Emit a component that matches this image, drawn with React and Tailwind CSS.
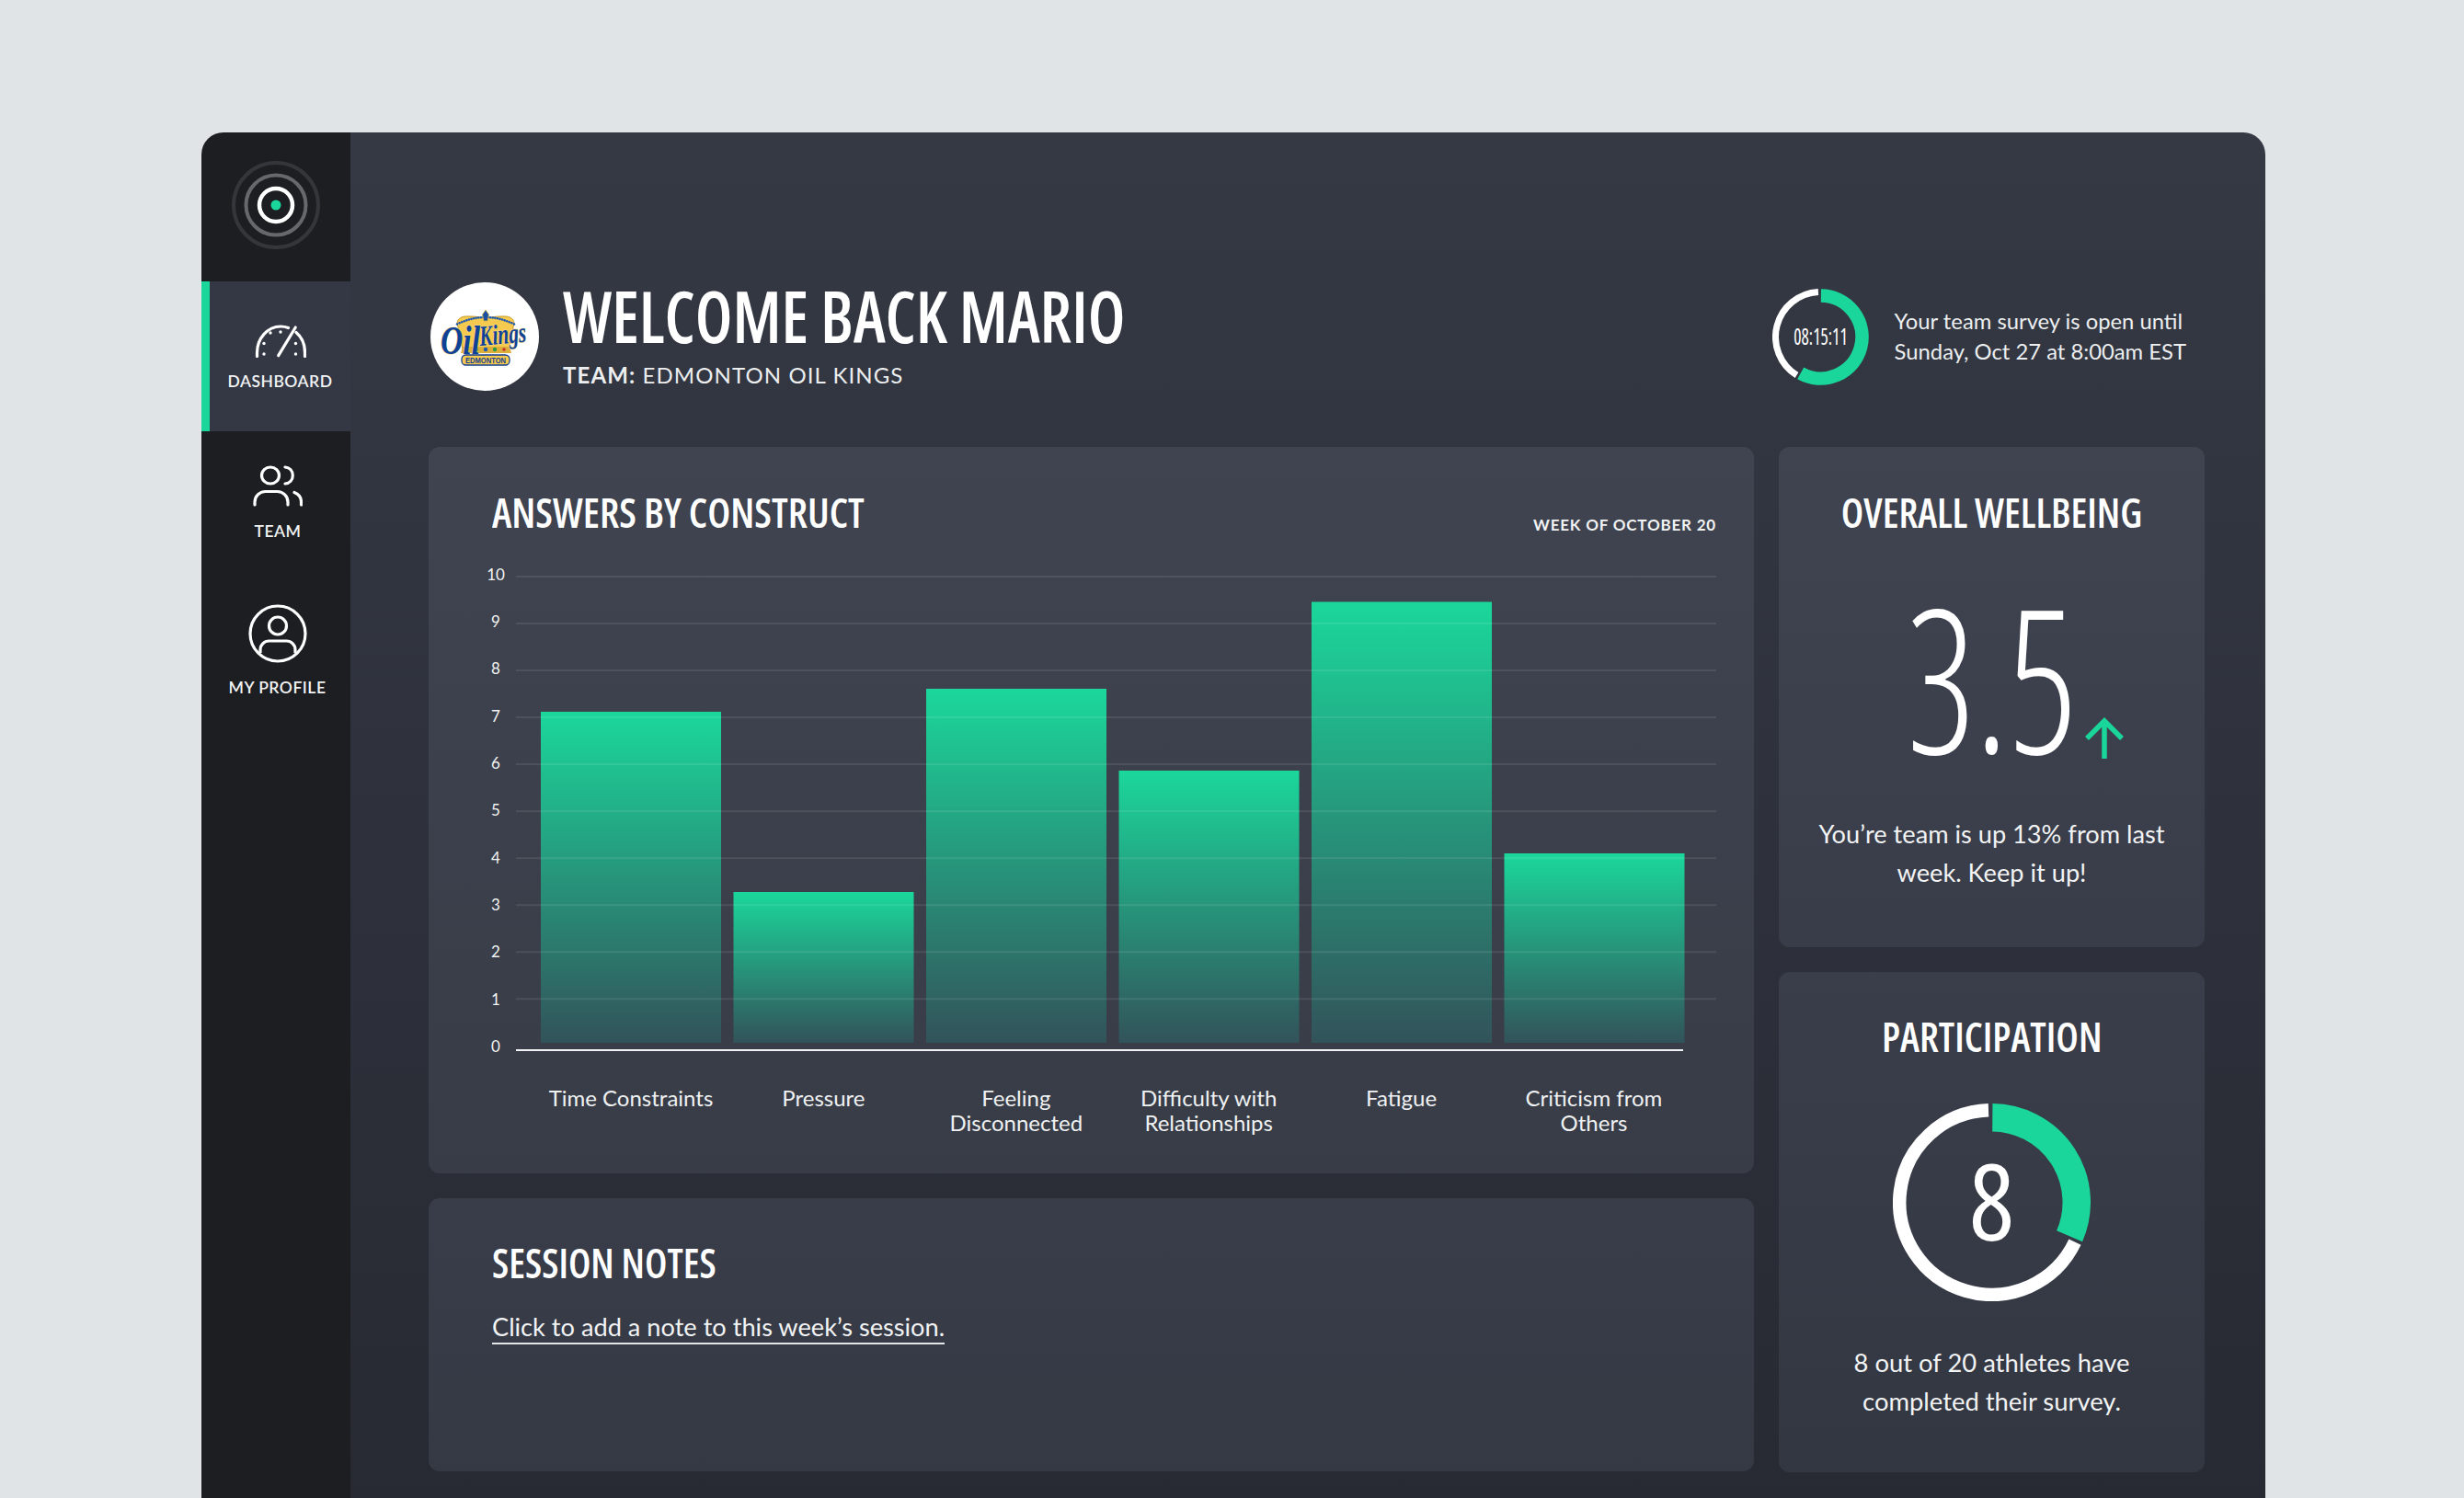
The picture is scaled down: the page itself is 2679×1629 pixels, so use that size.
const GREEN = '#1bd69b';
const cond = "font-['Open_Sans',sans-serif] font-stretch-[75%]";

function polar(cx, cy, r, deg) {
  const a = ((deg - 90) * Math.PI) / 180;
  return [cx + r * Math.cos(a), cy + r * Math.sin(a)];
}
function arc(cx, cy, r, from, to) {
  const [x1, y1] = polar(cx, cy, r, from);
  const [x2, y2] = polar(cx, cy, r, to);
  return `M${x1} ${y1}A${r} ${r} 0 ${to - from > 180 ? 1 : 0} 1 ${x2} ${y2}`;
}

function Ring({ size, gr, gw, gEnd, wr, ww, wStart, wEnd, gStart = 0.5, children }) {
  const c = size / 2;
  return (
    <div className="relative shrink-0" style={{ width: size, height: size }}>
      <svg width={size} height={size} viewBox={`0 0 ${size} ${size}`} fill="none" className="block">
        <path d={arc(c, c, wr, wStart, wEnd)} stroke="#ffffff" strokeWidth={ww} />
        <path d={arc(c, c, gr, gStart, gEnd)} stroke={GREEN} strokeWidth={gw} />
      </svg>
      <div className="absolute inset-0 flex items-center justify-center text-white">{children}</div>
    </div>
  );
}

function AppLogo() {
  return (
    <svg width="100" height="100" viewBox="0 0 100 100" fill="none">
      <circle cx="50" cy="50" r="46" stroke="#34363b" strokeWidth="4" />
      <circle cx="50" cy="50" r="32.5" stroke="#66686c" strokeWidth="4" />
      <circle cx="50" cy="50" r="18" stroke="#ffffff" strokeWidth="4.5" />
      <circle cx="50" cy="50" r="5.5" fill={GREEN} />
    </svg>
  );
}

function GaugeIcon() {
  return (
    <svg width="56" height="36" viewBox="0 0 56 36" fill="none" stroke="#fff" strokeWidth="3.2" strokeLinecap="round">
      <path d="M2.5 34.5v-4C2.5 15 14 2 28 2c3 0 6 .5 8.5 1.500" />
      <path d="M45 8.500c6 5 9.500 13 9.500 22v4" />
      <path d="M25.700 33.700L44.300 3" />
      <g fill="#fff" stroke="none">
        <circle cx="10" cy="32" r="1.700" />
        <circle cx="10" cy="20.500" r="1.700" />
        <circle cx="17" cy="9" r="1.700" />
        <circle cx="28" cy="8" r="1.700" />
        <circle cx="44.500" cy="20.500" r="1.700" />
        <circle cx="44.500" cy="32" r="1.700" />
      </g>
    </svg>
  );
}

function TeamIcon() {
  return (
    <svg width="54" height="45" viewBox="0 0 54 45" fill="none" stroke="#fff" strokeWidth="3.2" strokeLinecap="round">
      <ellipse cx="19" cy="11" rx="9.500" ry="9" />
      <path d="M35 2c5 .5 8.300 4 8.300 9s-3.300 8.500-8.300 9" />
      <path d="M2 43v-3a11.500 11.500 0 0 1 11.500-11.500h13A11.500 11.500 0 0 1 38 40v3" />
      <path d="M45 29.500c4 1.500 7.500 5 7.500 10.500v3" />
    </svg>
  );
}

function ProfileIcon() {
  return (
    <svg width="64" height="64" viewBox="0 0 64 64" fill="none" stroke="#fff" strokeWidth="3.200">
      <circle cx="32" cy="32" r="30" />
      <circle cx="32" cy="23.500" r="9.500" />
      <path d="M13 53v-3.500A9.500 9.500 0 0 1 22.500 40h19a9.500 9.500 0 0 1 9.500 9.500V53" />
    </svg>
  );
}

function TeamLogo() {
  const beads = [];
  for (let i = 0; i <= 24; i++) {
    const t = i / 24;
    const x = 29 + t * 62;
    const y = 38 + 30 * (t - 0.5) * (t - 0.5);
    beads.push(<circle key={i} cx={x} cy={y} r="1.300" fill="#1d5ab0" />);
  }
  return (
    <svg width="118" height="118" viewBox="0 0 118 118" className="ml-[2px] block shrink-0">
      <circle cx="59" cy="59" r="59" fill="#fff" />
      <path d="M29 44c1-5 5-7 10-7 8 0 15 0 21 3 6-3 13-3 21-3 5 0 9 2 10 7l-6 29H35z" fill="#f6c94f" stroke="#c99a2a" strokeWidth="1" />
      {beads}
      <path d="M60 30l3.500 5-1.500 7h-4l-1.500-7z" fill="#1a4fa3" stroke="#d9b23c" strokeWidth=".8" />
      <path d="M35 70h51l2 7H33z" fill="#dcae3a" />
      <circle cx="40" cy="73" r="1.800" fill="#c8332b" />
      <circle cx="50" cy="73" r="2.200" fill="#2a9a4a" />
      <circle cx="60" cy="73" r="2.200" fill="#1d5ab0" />
      <circle cx="70" cy="73" r="2.200" fill="#2a9a4a" />
      <circle cx="80" cy="73" r="1.800" fill="#c8332b" />
      <text x="11" y="78" fontFamily="'Liberation Serif',serif" fontStyle="italic" fontWeight="700" fontSize="44" textLength="43" lengthAdjust="spacingAndGlyphs" fill="#0f4296" stroke="#f6dc8a" strokeWidth="1.200" paintOrder="stroke">Oil</text>
      <text x="54" y="69" transform="rotate(-5 54 69)" fontFamily="'Liberation Serif',serif" fontStyle="italic" fontWeight="700" fontSize="31" textLength="51" lengthAdjust="spacingAndGlyphs" fill="#0f4296" stroke="#f6dc8a" strokeWidth="1.200" paintOrder="stroke">Kings</text>
      <rect x="34" y="79" width="52" height="11" rx="4.500" fill="#f6c94f" stroke="#153f8f" strokeWidth="1.300" />
      <text x="60" y="88" textAnchor="middle" fontFamily="'Liberation Sans',sans-serif" fontWeight="700" fontSize="8.500" textLength="44" lengthAdjust="spacingAndGlyphs" fill="#153f8f">EDMONTON</text>
    </svg>
  );
}

const GRID = [10, 9, 8, 7, 6, 5, 4, 3, 2, 1];
const BARS = [
  ['Time', 60, 163],
  ['Pressure', 269.5, 359],
  ['Feeling', 479, 138],
  ['Difficulty', 688.5, 227],
  ['Fatigue', 898, 43.5],
  ['Criticism', 1107.5, 317],
];

function Plot() {
  return (
    <svg width="1338" height="540" viewBox="0 0 1338 540" className="block">
      <defs>
        <linearGradient id="barFill" x1="0" y1="0" x2="0" y2="1">
          <stop offset="0" stopColor="#1bd79b" />
          <stop offset="1" stopColor="#32535a" />
        </linearGradient>
      </defs>
      {BARS.map((b) => (
        <rect key={b[0]} x={b[1]} y={b[2]} width="196" height={523 - b[2]} fill="url(#barFill)" />
      ))}
      {GRID.map((n, i) => (
        <rect key={n} x="33" y={15 + i * 51.03} width="1305" height="2" fill="#ffffff" fillOpacity="0.09" />
      ))}
      {[10, 9, 8, 7, 6, 5, 4, 3, 2, 1, 0].map((n, i) => (
        <text key={n} x="11" y={19.5 + i * 51.37} textAnchor="middle" fontFamily="Lato,sans-serif" fontSize="17" fill="#f2f3f4">{n}</text>
      ))}
      <rect x="33" y="530" width="1269" height="2" fill="#f1f2f3" />
    </svg>
  );
}

function NavItem({ active, icon, label, className }) {
  return (
    <div className={`flex flex-col items-center ${active ? 'h-[163px] pt-[47px] border-l-[9px] border-[#1bd69b] bg-[#343844]' : ''} ${className || ''}`}>
      {icon}
      <div className={`text-[17.500px] leading-[20px] font-semibold tracking-[0.5px] text-[#f2f3f4] ${active ? 'mt-[16px]' : 'mt-[17px]'}`}>{label}</div>
    </div>
  );
}

export default function App() {
  return (
    <div className="h-[1629px] overflow-hidden bg-[#e0e4e7] pt-[144px] pl-[219px] font-['Lato',sans-serif]">
      <div className="flex h-[1485px] w-[2244px] overflow-hidden rounded-t-[24px]">
        <aside className="w-[162px] shrink-0 bg-[#1c1e22]">
          <div className="flex h-[162px] items-center justify-center pb-[4px]"><AppLogo /></div>
          <NavItem active icon={<GaugeIcon />} label="DASHBOARD" />
          <NavItem icon={<TeamIcon />} label="TEAM" className="pt-[37px] pl-[4px]" />
          <NavItem icon={<ProfileIcon />} label="MY PROFILE" className="pt-[69px] pl-[3px]" />
        </aside>

        <main className="flex-1 bg-gradient-to-b from-[#353944] to-[#272a33] pl-[85px] pr-[66px]">
          <header className="flex h-[342px] items-center pt-[102px]">
            <TeamLogo />
            <div className="mb-[8px] ml-[26px]">
              <h1 className={`${cond} origin-left scale-x-[.918] whitespace-nowrap text-[78px] font-semibold leading-[84px] text-white`}>WELCOME BACK MARIO</h1>
              <div className="mt-[8px] text-[24px] leading-[30px] tracking-[1.1px] text-[#eceef0]"><span className="font-bold">TEAM:</span> EDMONTON OIL KINGS</div>
            </div>
            <div className="ml-auto mr-[20px] flex items-center gap-[28px]">
              <Ring size={105} gr={45} gw={14.6} gEnd={209} wr={49} ww={7} wStart={212} wEnd={357}>
                <span className={`${cond} -translate-y-[1px] scale-x-[.78] text-[25px] leading-none`}>08:15:11</span>
              </Ring>
              <div className="text-[23.800px] leading-[33px] text-[#eceef0]">Your team survey is open until<br />Sunday, Oct 27 at 8:00am EST</div>
            </div>
          </header>

          <div className="grid grid-cols-[1441px_463px] gap-x-[27px]">
            <div className="flex flex-col gap-[27px]">
              <section className="h-[790px] rounded-[12px] bg-gradient-to-b from-[#3f4450] to-[#373c47] pl-[62px] pr-[41px]">
                <div className="flex h-[125px] items-start justify-between pl-[7px] pt-[46px]">
                  <h2 className={`${cond} origin-left scale-x-[.978] whitespace-nowrap text-[45px] font-semibold leading-[50px] text-white`}>ANSWERS BY CONSTRUCT</h2>
                  <div className="mt-[27px] text-[17px] font-bold leading-[24px] tracking-[0.8px] text-[#f2f3f4]">WEEK OF OCTOBER 20</div>
                </div>
                <Plot />
                <div className="ml-[60px] grid w-[1243px] grid-cols-6 gap-x-[13.400px] pt-[29px] text-center text-[24px] leading-[27px] text-[#eff1f2]">
                  <div>Time Constraints</div>
                  <div>Pressure</div>
                  <div>Feeling<br />Disconnected</div>
                  <div>Difficulty with<br />Relationships</div>
                  <div>Fatigue</div>
                  <div>Criticism from<br />Others</div>
                </div>
              </section>

              <section className="h-[297px] rounded-[12px] bg-gradient-to-b from-[#393d49] to-[#343944] pl-[69px] pt-[45px]">
                <h2 className={`${cond} origin-left scale-x-[.954] whitespace-nowrap text-[45px] font-semibold leading-[50px] text-white`}>SESSION NOTES</h2>
                <div className="mt-[28px] inline-block border-b-2 border-[#e4e6e8] text-[27.200px] leading-[34px] text-[#f2f3f4]">Click to add a note to this week’s session.</div>
              </section>
            </div>

            <div className="flex flex-col gap-[27px]">
              <section className="h-[544px] rounded-[12px] bg-gradient-to-b from-[#3f4450] to-[#393d49] pt-[46px] text-center">
                <h2 className={`${cond} scale-x-[.955] whitespace-nowrap text-[45px] font-semibold leading-[50px] text-white`}>OVERALL WELLBEING</h2>
                <div className="relative mt-[43px] flex h-[221px] justify-center">
                  <span className={`${cond} scale-x-[.84] text-[218px] font-[350] leading-[221px] text-white`}>3.5</span>
                  <svg width="44" height="46" viewBox="0 0 44 46" fill="none" stroke={GREEN} strokeWidth="5.500" className="absolute left-[332px] top-[155px]">
                    <path d="M22 45V4M3 23L22 4l19 19" />
                  </svg>
                </div>
                <p className="mt-[40px] text-[27.200px] leading-[42px] text-[#f2f3f4]">You’re team is up 13% from last<br />week. Keep it up!</p>
              </section>

              <section className="flex h-[544px] flex-col items-center rounded-[12px] bg-gradient-to-b from-[#3a3e4a] to-[#333742] pt-[45px] text-center">
                <h2 className={`${cond} scale-x-[.96] whitespace-nowrap text-[45px] font-semibold leading-[50px] text-white`}>PARTICIPATION</h2>
                <div className="mt-[48px]">
                  <Ring size={215} gr={92.250} gw={30.500} gEnd={113.500} wr={100.250} ww={14.500} wStart={115.500} wEnd={358}>
                    <span className={`${cond} -translate-y-[3px] text-[115px] font-medium leading-none`}>8</span>
                  </Ring>
                </div>
                <p className="mt-[46px] text-[27.400px] leading-[42px] text-[#f2f3f4]">8 out of 20 athletes have<br />completed their survey.</p>
              </section>
            </div>
          </div>
        </main>
      </div>
    </div>
  );
}
